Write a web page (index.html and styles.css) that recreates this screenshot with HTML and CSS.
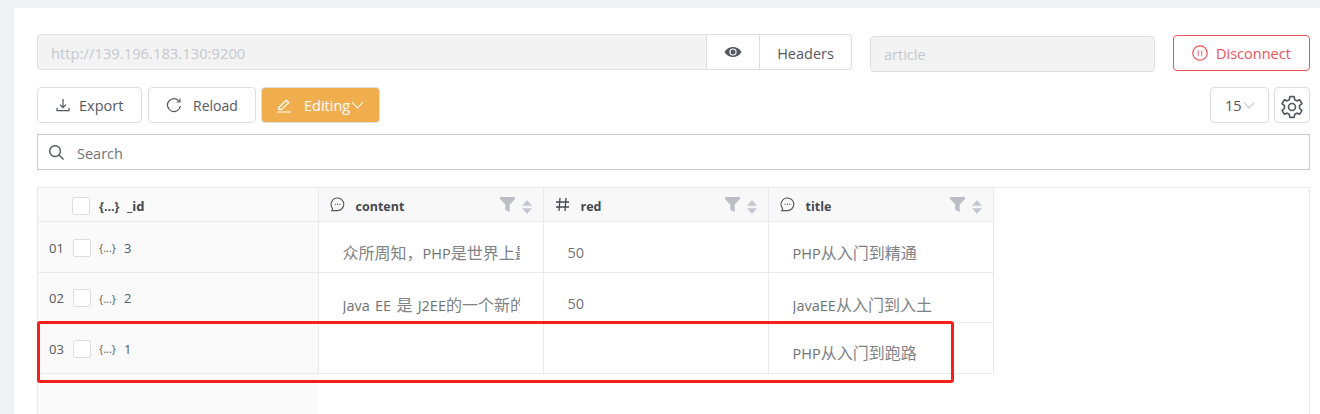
FILE: index.html
```html
<!DOCTYPE html>
<html lang="en">
<head>
    <meta charset="UTF-8">
    <meta name="viewport" content="width=device-width, initial-scale=1.0">
    <title>Elasticsearch Editor</title>
    <link rel="stylesheet" href="styles.css">
</head>
<body>
    <div class="panel">
        <!-- Connection row -->
        <div class="conn-row">
            <div class="url-group">
                <input class="field url-input" type="text" placeholder="http://139.196.183.130:9200" disabled>
                <div class="addon eye-addon">
                    <svg width="18" height="18" viewBox="0 0 18 18"><path d="M0.5 9C2.5 5.6 5.5 3.9 9 3.9S15.500 5.600 17.500 9C15.500 12.400 12.500 14.100 9 14.100S2.500 12.400 0.500 9Z" fill="#55585f"/><circle cx="9" cy="9" r="3.600" fill="#fff"/><circle cx="9" cy="9" r="2.500" fill="#55585f"/></svg>
                </div>
                <div class="addon headers-addon">Headers</div>
            </div>
            <input class="field index-input" type="text" placeholder="article" disabled>
            <button class="btn btn-disconnect" type="button">
                <svg width="16" height="16" viewBox="0 0 16 16" fill="none" stroke="#f0525a"><circle cx="8" cy="8" r="7.200" stroke-width="1.200"/><path d="M6.300 5.200V10.800M9.700 5.200V10.800" stroke-width="1.300" opacity=".7"/></svg>
                Disconnect
            </button>
        </div>

        <!-- Toolbar -->
        <div class="tool-row">
            <button class="btn btn-export" type="button">
                <svg width="14" height="14" viewBox="0 0 14 14" fill="none" stroke="#55585f" stroke-width="1.200"><path d="M7 1V9.500M4 6.700L7 9.700L10 6.700M1 9.800V12.700H13V9.800"/></svg>
                Export
            </button>
            <button class="btn btn-reload" type="button">
                <svg width="16" height="16" viewBox="0 0 16 16" fill="none" stroke="#55585f" stroke-width="1.300"><path d="M13.400 4.500A6.500 6.500 0 1 0 14.400 9"/><path d="M14 1.500V5H10.500" stroke-width="1.100"/></svg>
                Reload
            </button>
            <button class="btn btn-editing" type="button">
                <svg width="16" height="16" viewBox="0 0 16 16" fill="none" stroke="#fff" stroke-width="1.200"><path d="M2.500 10.800L10.200 3.200L12.800 5.500L5.500 12.400H2.700ZM1 15H15"/></svg>
                <span class="editing-label">Editing</span>
                <svg class="editing-arrow" width="13" height="8" viewBox="0 0 13 8" fill="none" stroke="#fff" stroke-width="1.100"><path d="M1 1L6.500 7L12 1"/></svg>
            </button>
            <div class="tool-right">
                <div class="page-size">
                    15
                    <svg width="12" height="7" viewBox="0 0 12 7" fill="none" stroke="#c5c8ce" stroke-width="1.100"><path d="M1 .7L6 6L11 .7"/></svg>
                </div>
                <div class="gear-btn">
                    <svg width="24" height="24" viewBox="0 0 22 22" fill="none" stroke="#55585f" stroke-width="1.500" stroke-linejoin="round"><path d="M9 1.500H13L13.500 4.300L15.400 5.400L18.100 4.400L20.100 7.900L17.900 9.700V12.300L20.100 14.100L18.100 17.600L15.400 16.600L13.500 17.700L13 20.500H9L8.500 17.700L6.600 16.600L3.900 17.600L1.900 14.100L4.100 12.300V9.700L1.900 7.900L3.900 4.400L6.600 5.400L8.500 4.300Z"/><circle cx="11" cy="11" r="3.200"/></svg>
                </div>
            </div>
        </div>

        <!-- Search -->
        <div class="search-box">
            <svg width="17" height="17" viewBox="0 0 18 18" fill="none" stroke="#55585f" stroke-width="1.500"><circle cx="7.500" cy="7.500" r="5.700"/><path d="M11.700 11.700L16.500 16.500"/></svg>
            <span class="search-text">Search</span>
        </div>

        <!-- Results table -->
        <div class="table-wrap">
            <table class="grid">
                <colgroup>
                    <col class="col-id">
                    <col class="col-data">
                    <col class="col-data">
                    <col class="col-data">
                </colgroup>
                <thead>
                    <tr>
                        <th class="id-cell">
                            <div class="id-head"><span class="check"></span><span class="obj">{...}</span><span>_id</span></div>
                        </th>
                        <th>
                            <div class="col-head">
                                <svg class="type-icon" width="15" height="15" viewBox="0 0 15 15" fill="none" stroke="#55585f" stroke-width="1.100"><path d="M7.500 1A6.300 6.300 0 1 1 7.500 13.600H1.700L2.700 11.500A6.300 6.300 0 0 1 7.500 1Z"/><path d="M4.700 7.300H5.600M7 7.300H8M9.400 7.300H10.300" stroke-width="1.200"/></svg>
                                <span class="col-name">content</span>
                                <svg class="filter" width="15" height="15" viewBox="0 0 15 15"><path d="M0 0H15V2L9.700 7.500V15L5.300 13V7.500L0 2Z" fill="#bbbec4"/></svg>
                                <svg class="sort" width="10" height="14" viewBox="0 0 10 14"><path d="M5 0L10 5.800H0ZM5 14L0 8.200H10Z" fill="#c5c8ce"/></svg>
                            </div>
                        </th>
                        <th>
                            <div class="col-head">
                                <svg class="type-icon" width="15" height="15" viewBox="0 0 15 15" fill="none" stroke="#45484f" stroke-width="1.300"><path d="M5 1L4 14M11 1L10 14M1 5H14M1 10H14"/></svg>
                                <span class="col-name">red</span>
                                <svg class="filter" width="15" height="15" viewBox="0 0 15 15"><path d="M0 0H15V2L9.700 7.500V15L5.300 13V7.500L0 2Z" fill="#bbbec4"/></svg>
                                <svg class="sort" width="10" height="14" viewBox="0 0 10 14"><path d="M5 0L10 5.800H0ZM5 14L0 8.200H10Z" fill="#c5c8ce"/></svg>
                            </div>
                        </th>
                        <th>
                            <div class="col-head">
                                <svg class="type-icon" width="15" height="15" viewBox="0 0 15 15" fill="none" stroke="#55585f" stroke-width="1.100"><path d="M7.500 1A6.300 6.300 0 1 1 7.500 13.600H1.700L2.700 11.500A6.300 6.300 0 0 1 7.500 1Z"/><path d="M4.700 7.300H5.600M7 7.300H8M9.400 7.300H10.300" stroke-width="1.200"/></svg>
                                <span class="col-name">title</span>
                                <svg class="filter" width="15" height="15" viewBox="0 0 15 15"><path d="M0 0H15V2L9.700 7.500V15L5.300 13V7.500L0 2Z" fill="#bbbec4"/></svg>
                                <svg class="sort" width="10" height="14" viewBox="0 0 10 14"><path d="M5 0L10 5.800H0ZM5 14L0 8.200H10Z" fill="#c5c8ce"/></svg>
                            </div>
                        </th>
                    </tr>
                </thead>
                <tbody>
                    <tr>
                        <td class="id-cell"><div class="id-row"><span class="row-no">01</span><span class="check"></span><span class="obj">{...}</span><span>3</span></div></td>
                        <td><div class="value"><span class="cjk">众所周知，</span>PHP<span class="cjk">是世界上最</span></div></td>
                        <td><div class="value">50</div></td>
                        <td><div class="value">PHP<span class="cjk">从入门到精通</span></div></td>
                    </tr>
                    <tr class="row-short">
                        <td class="id-cell"><div class="id-row"><span class="row-no">02</span><span class="check"></span><span class="obj">{...}</span><span>2</span></div></td>
                        <td><div class="value">Java EE <span class="cjk">是</span> J2EE<span class="cjk">的一个新的</span></div></td>
                        <td><div class="value">50</div></td>
                        <td><div class="value">JavaEE<span class="cjk">从入门到入土</span></div></td>
                    </tr>
                    <tr>
                        <td class="id-cell"><div class="id-row"><span class="row-no">03</span><span class="check"></span><span class="obj">{...}</span><span>1</span></div></td>
                        <td></td>
                        <td></td>
                        <td><div class="value value-last">PHP<span class="cjk">从入门到跑路</span></div></td>
                    </tr>
                </tbody>
            </table>
            <div class="id-filler"></div>
        </div>
    </div>

    <!-- Annotation drawn over the screenshot -->
    <div class="highlight"></div>
</body>
</html>
```

FILE: styles.css
```css
* {
    box-sizing: border-box;
}
html, body {
    margin: 0;
    height: 414px;
    overflow: hidden;
}
body {
    position: relative;
    background-color: #f0f2f5;
    font-family: "Open Sans", "Noto Sans CJK SC", sans-serif;
    font-size: 14.500px;
    color: #55585f;
}
.panel {
    margin: 8px 0 0 14px;
    height: 406px;
    padding: 26px 10px 0 23px;
    background-color: white;
}

/* connection row */
.conn-row {
    display: flex;
    align-items: flex-start;
}
.field {
    height: 36px;
    padding: 0 13px;
    border: 1px solid #dcdee2;
    background-color: #f3f3f3;
    font-family: inherit;
    font-size: 14.500px;
}
.field::placeholder {
    color: #c5c8ce;
    opacity: 1;
}
.url-group {
    display: flex;
    width: 815px;
    height: 36px;
}
.url-input {
    width: 670px;
    padding-top: 2px;
    border-radius: 4px 0 0 4px;
    font-size: 14.800px;
}
.addon {
    display: flex;
    align-items: center;
    justify-content: center;
    height: 36px;
    border: 1px solid #dcdee2;
    border-left: none;
}
.eye-addon {
    width: 53px;
}
.headers-addon {
    width: 92px;
    padding-top: 3px;
    border-radius: 0 4px 4px 0;
}
.index-input {
    width: 285px;
    margin: 2px 0 0 18px;
    border-radius: 4px;
}
.btn {
    display: flex;
    align-items: center;
    height: 36px;
    padding: 0;
    border: 1px solid #dcdee2;
    border-radius: 4px;
    background-color: white;
    color: #55585f;
    font-family: inherit;
    font-size: 14.500px;
}
.btn-disconnect {
    width: 137px;
    margin: 1px 0 0 18px;
    padding-left: 18px;
    gap: 8px;
    border-color: #f0525a;
    color: #f0525a;
}

/* toolbar */
.tool-row {
    display: flex;
    margin-top: 15px;
}
.btn-export {
    width: 105px;
    padding-left: 18px;
    gap: 9px;
}
.btn-reload {
    width: 108px;
    margin-left: 6px;
    padding-left: 17px;
    gap: 11px;
    font-size: 14px;
}
.btn-editing {
    width: 119px;
    margin-left: 5px;
    padding-left: 14px;
    background-color: #f0ae4f;
    border-color: #dcdee2;
    color: white;
}
.editing-label {
    margin-left: 12px;
}
.editing-arrow {
    margin-left: 1px;
}
.tool-right {
    display: flex;
    gap: 5px;
    margin-left: auto;
}
.page-size {
    display: flex;
    align-items: center;
    gap: 1px;
    width: 59px;
    height: 36px;
    padding-left: 14px;
    border: 1px solid #dcdee2;
    border-radius: 4px;
}
.gear-btn {
    display: flex;
    align-items: center;
    justify-content: center;
    width: 36px;
    height: 36px;
    padding-top: 3px;
    border: 1px solid #dcdee2;
    border-radius: 4px;
}

/* search */
.search-box {
    display: flex;
    align-items: center;
    gap: 12px;
    height: 36px;
    margin-top: 11px;
    padding-left: 10px;
    border: 1px solid #c8c8c8;
}
.search-text {
    margin-top: 2px;
    color: #6f7278;
}

/* table */
.table-wrap {
    margin-top: 17px;
    height: 240px;
    border: 1px solid #e8eaec;
    border-bottom: none;
}
.grid {
    width: 955px;
    table-layout: fixed;
    border-collapse: collapse;
}
.col-id {
    width: 280px;
}
.col-data {
    width: 225px;
}
.grid th,
.grid td {
    padding: 0;
    border-right: 1px solid #e8eaec;
    border-bottom: 1px solid #e8eaec;
    font-weight: normal;
    text-align: left;
}
.grid th {
    height: 33px;
    background-color: #f8f8f9;
}
.grid td {
    height: 51px;
}
.grid .row-short td {
    height: 50px;
}
.grid .row-short .value {
    margin-top: 13px;
}
.grid .id-cell {
    background-color: #fafafa;
}
.id-head,
.id-row {
    display: flex;
    align-items: center;
}
.id-head {
    padding: 4px 0 0 34px;
    font-size: 13px;
    font-weight: bold;
    color: #45484f;
}
.id-row {
    padding: 2px 0 0 11px;
    font-size: 13px;
}
.row-no {
    width: 24px;
}
.check {
    width: 18px;
    height: 18px;
    margin-right: 9px;
    border: 1px solid #dcdee2;
    border-radius: 2px;
    background-color: white;
}
.id-row .check {
    margin-right: 8px;
}
.obj {
    width: 25px;
    font-size: 11px;
}
.id-head .obj {
    width: 28px;
    font-size: 12.500px;
}
.col-head {
    display: flex;
    align-items: center;
    padding: 0 11px;
}
.type-icon {
    margin-top: 1px;
}
.col-name {
    margin: 4px 0 0 11px;
    font-size: 12.500px;
    font-weight: bold;
    color: #45484f;
}
.filter {
    margin: 0 0 0 auto;
}
.sort {
    margin: 6px 0 0 7px;
}
.value {
    width: 177px;
    margin: 11px 0 0 24px;
    overflow: hidden;
    white-space: nowrap;
    font-size: 14.500px;
    word-spacing: 1.500px;
    color: #707276;
}
.value-last {
    margin-top: 9px;
}
.cjk {
    font-size: 16px;
    color: #808285;
}
.id-filler {
    width: 280px;
    height: 40px;
    background-color: #fafafa;
}

/* red annotation box */
.highlight {
    position: absolute;
    left: 37px;
    top: 321px;
    width: 917px;
    height: 62px;
    border: 3px solid #f5201a;
    border-radius: 3px;
}
```
